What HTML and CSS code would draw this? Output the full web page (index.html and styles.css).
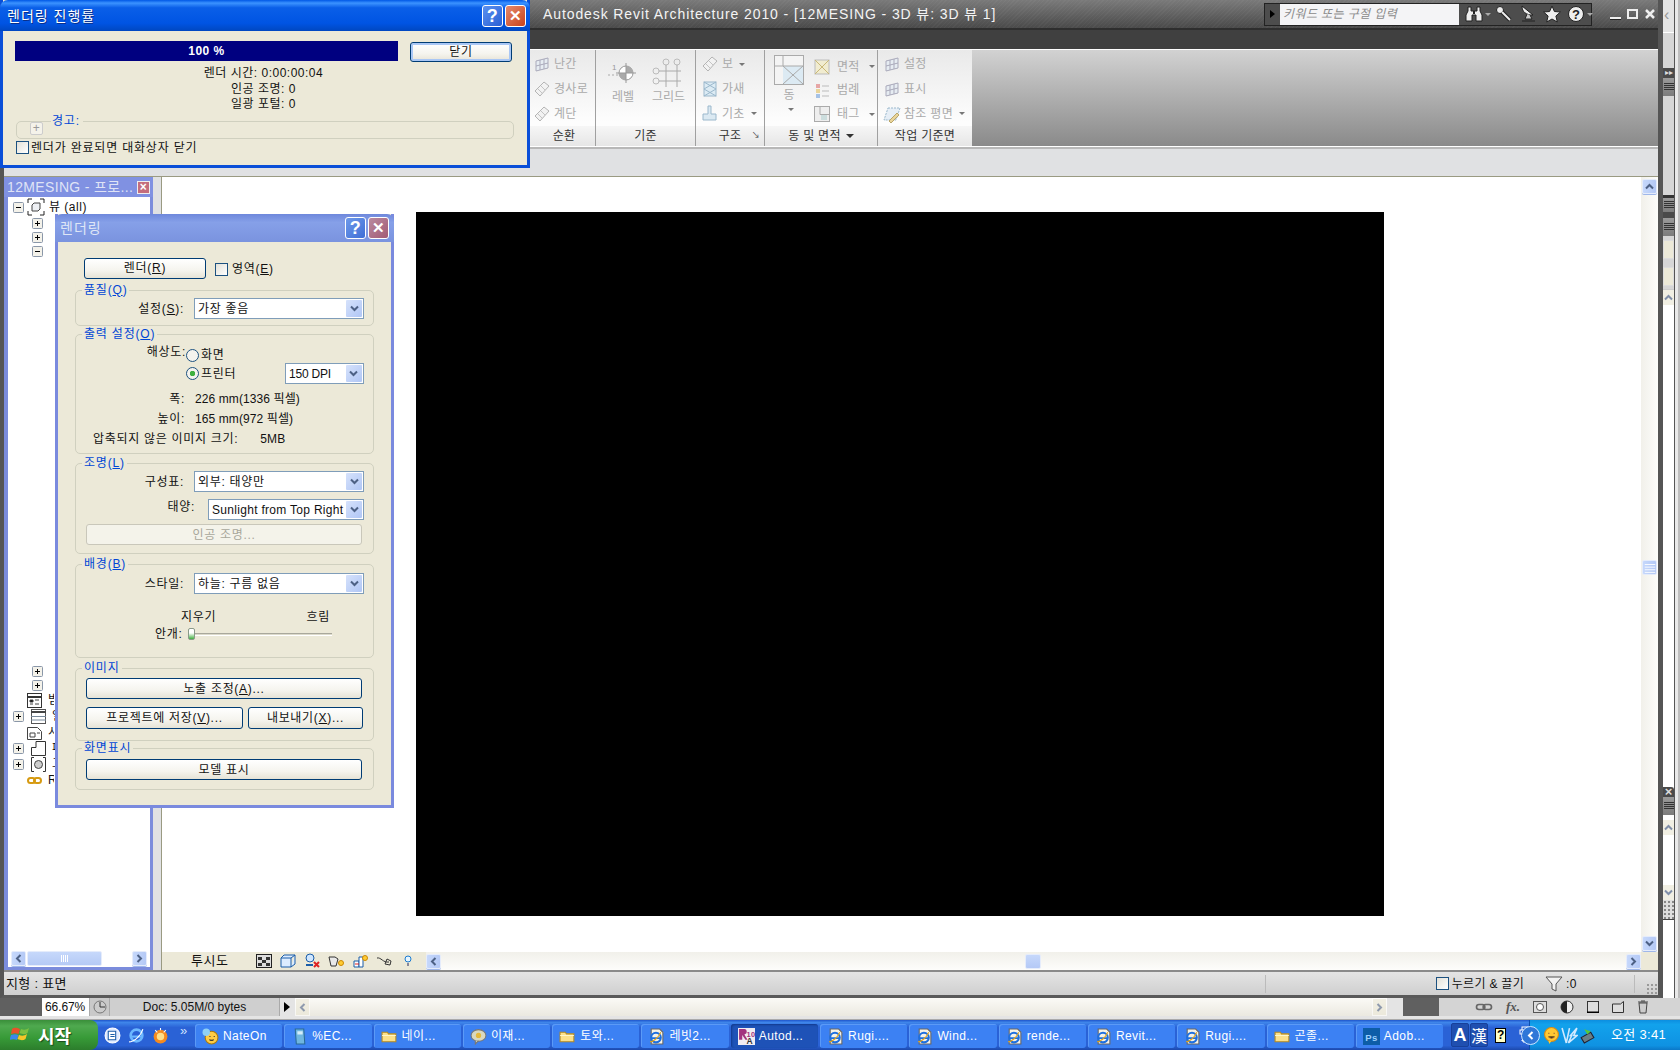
FILE: index.html
```html
<!DOCTYPE html>
<html lang="ko">
<head>
<meta charset="utf-8">
<title>Autodesk Revit Architecture 2010</title>
<link rel="stylesheet" href="styles.css">
</head>
<body>
<svg class="defs" width="0" height="0">
  <symbol id="ie" viewBox="0 0 16 16"><path d="M3 1h8l3 3v11H3z" fill="#f4f2e8" stroke="#666"/><circle cx="7.5" cy="9" r="4.5" fill="none" stroke="#1d6fe0" stroke-width="2"/><path d="M3.5 9.500h8" stroke="#1d6fe0" stroke-width="1.500"/><path d="M2 13c3 0 8-4 10-9" fill="none" stroke="#e3a51b"/></symbol>
  <symbol id="folder" viewBox="0 0 16 16"><path d="M1 4h5l1 1.500h7V13H1z" fill="#fbe08a" stroke="#b58a22"/><path d="M1 7h13" stroke="#fff6c8"/></symbol>
  <symbol id="plus" viewBox="0 0 11 11"><rect x=".5" y=".5" width="10" height="10" rx="1" fill="#f4f2ea" stroke="#8a97a8"/><path d="M3 5.500h5M5.500 3v5" stroke="#000"/></symbol>
  <symbol id="minus" viewBox="0 0 11 11"><rect x=".5" y=".5" width="10" height="10" rx="1" fill="#f4f2ea" stroke="#8a97a8"/><path d="M3 5.500h5" stroke="#000"/></symbol>
  <symbol id="arrow-down" viewBox="0 0 9 7"><path d="M1 1.500l3.500 3.500L8 1.500" fill="none" stroke="#4d6185" stroke-width="2"/></symbol>
  <symbol id="arrow-up" viewBox="0 0 9 7"><path d="M1 5.500L4.500 2 8 5.500" fill="none" stroke="#4d6185" stroke-width="2"/></symbol>
  <symbol id="arrow-left" viewBox="0 0 7 9"><path d="M5.500 1L2 4.500 5.500 8" fill="none" stroke="#4d6185" stroke-width="2"/></symbol>
  <symbol id="arrow-right" viewBox="0 0 7 9"><path d="M1.500 1L5 4.500 1.500 8" fill="none" stroke="#4d6185" stroke-width="2"/></symbol>
  <symbol id="lines" viewBox="0 0 14 16"><path d="M1 4h12M1 7h12M1 10h12M1 13h12" stroke="#fff"/></symbol>
  <symbol id="lines-dark" viewBox="0 0 12 12"><path d="M1 2.500h10M1 4.500h10M1 6.500h10M1 8.500h10" stroke="#333"/></symbol>
  <symbol id="rib-gen" viewBox="0 0 18 18"><path d="M2 11L11 2l5 4-9 10z" fill="#f2f2f2" stroke="#b4b4b4"/><path d="M5 9l4 4M8 6l4 4" stroke="#c4c4c4"/></symbol>
  <symbol id="rib-grid" viewBox="0 0 18 18"><path d="M3 6l12-3v10L3 16z" fill="#e6ecf2" stroke="#aab"/><path d="M7 5v10M11 4v10M3 11l12-3" stroke="#aab"/></symbol>
  <symbol id="rib-x" viewBox="0 0 18 18"><rect x="2" y="2" width="14" height="14" fill="#f1ecd0" stroke="#bbb"/><path d="M2 2l14 14M16 2L2 16" stroke="#c9b877"/></symbol>
  <symbol id="rib-bluex" viewBox="0 0 18 18"><rect x="3" y="2" width="12" height="14" fill="#dcebf4" stroke="#9bb8cc"/><path d="M3 2l12 7L3 16M15 2L3 9l12 7" fill="none" stroke="#9bb8cc"/></symbol>
  <symbol id="rib-legend" viewBox="0 0 18 18"><path d="M3 3h4v4H3z" fill="#e6a6a6"/><path d="M3 8h4v4H3z" fill="#e9d49a"/><path d="M3 13h4v4H3z" fill="#a6c2e6"/><path d="M9 5h7M9 10h7M9 15h7" stroke="#bbb"/></symbol>
  <symbol id="rib-tag" viewBox="0 0 18 18"><rect x="1.500" y="1.500" width="15" height="15" fill="#eee" stroke="#aaa"/><path d="M7 1.500v8h9.500" fill="none" stroke="#aaa"/><rect x="8" y="10" width="6" height="5" fill="#cdd"/></symbol>
  <symbol id="cube" viewBox="0 0 18 18"><path d="M1 5V1h4M13 1h4v4M17 13v4h-4M5 17H1v-4" fill="none" stroke="#222"/><path d="M5 7l2-2h6v6l-2 2H5z" fill="#eef0f4" stroke="#444"/></symbol>
</svg>

<div class="workspace">
  <div class="revit">
    <header class="titlebar">
      <span class="app-title">Autodesk Revit Architecture 2010 - [12MESING - 3D 뷰: 3D 뷰 1]</span>
      <div class="infobar">
        <span class="info-play"></span>
        <span class="info-input">키워드 또는 구절 입력</span>
        <svg class="info-ic" width="18" height="18" viewBox="0 0 18 18"><path d="M3 2h3v4h6V2h3v4l2 4v6h-6v-6H7v6H1v-6l2-4z" fill="#eee" stroke="#222"/><path d="M8 6h2v3H8z" fill="#222"/></svg>
        <span class="info-drop"></span>
        <svg class="info-ic" width="18" height="18" viewBox="0 0 18 18"><circle cx="5" cy="5" r="3.500" fill="#eee" stroke="#222"/><path d="M7 7l8 8" stroke="#222" stroke-width="4"/><path d="M7 7l8 8" stroke="#eee" stroke-width="2"/></svg>
        <svg class="info-ic" width="18" height="18" viewBox="0 0 18 18"><path d="M3 1c0 6 4 9 11 9z" fill="#eee" stroke="#222"/><path d="M8 9l-2 5h7l-2-4M3 16h13" fill="#ccc" stroke="#222"/></svg>
        <svg class="info-ic" width="18" height="18" viewBox="0 0 18 18"><path d="M9 1l2.400 5.500 6 .5-4.500 4 1.400 6L9 14l-5.300 3 1.400-6L.6 7l6-.5z" fill="#eee" stroke="#222"/></svg>
        <svg class="info-ic" width="18" height="18" viewBox="0 0 18 18"><circle cx="9" cy="9" r="7.500" fill="#eee" stroke="#222"/><text x="9" y="13.500" class="help-glyph">?</text></svg>
        <span class="info-drop"></span>
      </div>
      <div class="winctl">
        <span class="ctl-min"></span><span class="ctl-max"></span>
        <svg width="12" height="12" viewBox="0 0 12 12"><path d="M2 2l8 8M10 2l-8 8" stroke="#eee" stroke-width="2.500"/></svg>
      </div>
    </header>
    <div class="menubar"></div>
    <section class="ribbon">
      <div class="panel panel-loop">
        <div class="panel-body col">
          <div class="rib-item"><svg width="18" height="18"><use href="#rib-grid"/></svg>난간</div>
          <div class="rib-item"><svg width="18" height="18"><use href="#rib-gen"/></svg>경사로</div>
          <div class="rib-item"><svg width="18" height="18"><use href="#rib-gen"/></svg>계단</div>
        </div>
        <div class="panel-label">순환</div>
      </div>
      <div class="panel panel-datum">
        <div class="panel-body row">
          <div class="rib-large">
            <svg width="34" height="24" viewBox="0 0 34 24"><path d="M2 14h10" stroke="#aaa" stroke-dasharray="2 2"/><text x="6" y="9" class="rib-num">1</text><circle cx="20" cy="12" r="7" fill="#fff" stroke="#999"/><path d="M20 5a7 7 0 0 1 7 7h-7zM20 19a7 7 0 0 1-7-7h7z" fill="#aaa"/><path d="M10 12h20M20 2v20" stroke="#999"/></svg>
            <span>레벨</span>
          </div>
          <div class="rib-large">
            <svg width="32" height="30" viewBox="0 0 32 30"><circle cx="14" cy="4" r="3" fill="none" stroke="#bbb"/><circle cx="25" cy="4" r="3" fill="none" stroke="#bbb"/><circle cx="4" cy="13" r="3" fill="none" stroke="#bbb"/><circle cx="4" cy="23" r="3" fill="none" stroke="#bbb"/><path d="M14 7v22M25 7v22M7 13h22M7 23h22" stroke="#aaa"/></svg>
            <span>그리드</span>
          </div>
        </div>
        <div class="panel-label">기준</div>
      </div>
      <div class="panel panel-struct">
        <div class="panel-body col">
          <div class="rib-item"><svg width="18" height="18"><use href="#rib-gen"/></svg>보<i class="drop"></i></div>
          <div class="rib-item"><svg width="18" height="18"><use href="#rib-bluex"/></svg>가새</div>
          <div class="rib-item"><svg width="18" height="18" viewBox="0 0 18 18"><path d="M7 1h3v8h5v6H2V9h5z" fill="#dbe9f2" stroke="#9bb8cc"/></svg>기초<i class="drop"></i></div>
        </div>
        <div class="panel-label">구조<span class="launch">↘</span></div>
      </div>
      <div class="panel panel-room">
        <div class="panel-body row">
          <div class="rib-room">
            <svg width="30" height="30" viewBox="0 0 30 30"><rect x=".5" y=".5" width="29" height="29" fill="#f4f4f4" stroke="#aaa"/><path d="M9 11h20v18H9z" fill="#dceaf3"/><path d="M9 .5V11M.5 11H29.500M9 11l20 18M29 11L9 29" stroke="#aaa" fill="none"/></svg>
            <span>동</span><i class="drop"></i>
          </div>
          <div class="col col-room">
            <div class="rib-item"><svg width="18" height="18"><use href="#rib-x"/></svg>면적<i class="drop"></i></div>
            <div class="rib-item"><svg width="18" height="18"><use href="#rib-legend"/></svg>범례</div>
            <div class="rib-item"><svg width="18" height="18"><use href="#rib-tag"/></svg>태그<i class="drop"></i></div>
          </div>
        </div>
        <div class="panel-label">동 및 면적<i class="drop drop-dark"></i></div>
      </div>
      <div class="panel panel-work">
        <div class="panel-body col">
          <div class="rib-item"><svg width="18" height="18"><use href="#rib-grid"/></svg>설정</div>
          <div class="rib-item"><svg width="18" height="18"><use href="#rib-grid"/></svg>표시</div>
          <div class="rib-item"><svg width="18" height="18" viewBox="0 0 18 18"><path d="M5 3h12l-4 12H1z" fill="#e6eef6" stroke="#9bb8cc" stroke-dasharray="2 1"/><path d="M6 16l8-8 2 2-8 8z" fill="#e9d49a" stroke="#b9a66a"/></svg>참조 평면<i class="drop"></i></div>
        </div>
        <div class="panel-label">작업 기준면</div>
      </div>
      <div class="ribbon-fill"></div>
    </section>
    <div class="optionbar"></div>

    <main class="body">
      <aside class="dock">
        <div class="dock-title"><span>12MESING - 프로...</span><b class="dock-x">×</b></div>
        <div class="tree">
          <div class="tree-row l0"><svg width="11" height="11"><use href="#minus"/></svg><svg width="18" height="18"><use href="#cube"/></svg><span>뷰 (all)</span></div>
          <div class="tree-row l1"><svg width="11" height="11"><use href="#plus"/></svg></div>
          <div class="tree-row l1"><svg width="11" height="11"><use href="#plus"/></svg></div>
          <div class="tree-row l1"><svg width="11" height="11"><use href="#minus"/></svg></div>
          <div class="tree-gap"></div>
          <div class="tree-row l1"><svg width="11" height="11"><use href="#plus"/></svg></div>
          <div class="tree-row l1"><svg width="11" height="11"><use href="#plus"/></svg></div>
          <div class="tree-row l2"><span class="tree-blank"></span><svg width="15" height="15" viewBox="0 0 15 15"><rect x=".5" y=".5" width="14" height="14" fill="#fff" stroke="#333"/><path d="M0 4h15" stroke="#333" stroke-width="2"/><path d="M3 7h3v2H3zM8 7h4M3 11h3M8 11h4" stroke="#444"/></svg><span class="tree-clip">범례</span></div>
          <div class="tree-row l2"><svg width="11" height="11"><use href="#plus"/></svg><svg width="15" height="15" viewBox="0 0 15 15"><rect x=".5" y=".5" width="14" height="14" fill="#fff" stroke="#555"/><path d="M0 3h15" stroke="#444" stroke-width="2"/><path d="M0 7.500h15M0 11h15" stroke="#789"/></svg><span class="tree-clip">일람표</span></div>
          <div class="tree-row l2"><span class="tree-blank"></span><svg width="15" height="15" viewBox="0 0 15 15"><path d="M.5 2.500h10l4 4v8H.5z" fill="#fff" stroke="#444"/><path d="M3 8h5v4H3zM10 8h3" fill="none" stroke="#444"/></svg><span class="tree-clip">시트</span></div>
          <div class="tree-row l2"><svg width="11" height="11"><use href="#plus"/></svg><svg width="15" height="15" viewBox="0 0 15 15"><path d="M5 .5h9.500v14H.5v-8H5z" fill="#fff" stroke="#333"/></svg><span class="tree-clip">패밀리</span></div>
          <div class="tree-row l2"><svg width="11" height="11"><use href="#plus"/></svg><svg width="15" height="15" viewBox="0 0 15 15"><path d="M3 .5H.5v14H3M12 .5h2.500v14H12" fill="none" stroke="#333"/><circle cx="7.500" cy="7.500" r="4" fill="#ccc" stroke="#444"/></svg><span class="tree-clip">그룹</span></div>
          <div class="tree-row l2"><span class="tree-blank"></span><svg width="15" height="15" viewBox="0 0 15 15"><rect x="1" y="5" width="7" height="5" rx="2.500" fill="none" stroke="#d69a11" stroke-width="2"/><rect x="7" y="5" width="7" height="5" rx="2.500" fill="none" stroke="#d69a11" stroke-width="2"/></svg><span class="tree-clip">Revit</span></div>
        </div>
        <div class="dock-scroll">
          <span class="sb-btn"><svg width="7" height="9"><use href="#arrow-left"/></svg></span>
          <span class="sb-thumb-h"><i></i><i></i><i></i><i></i></span>
          <span class="sb-btn sb-end"><svg width="7" height="9"><use href="#arrow-right"/></svg></span>
        </div>
      </aside>
      <div class="canvas">
        <div class="view-row">
          <div class="view-area"><div class="render"></div></div>
          <div class="vscroll">
            <span class="sb-btn"><svg width="9" height="7"><use href="#arrow-up"/></svg></span>
            <span class="sb-thumb-v"><svg width="14" height="14"><use href="#lines"/></svg></span>
            <span class="sb-btn"><svg width="9" height="7"><use href="#arrow-down"/></svg></span>
          </div>
        </div>
        <div class="view-ctl">
          <span class="view-name">투시도</span>
          <div class="view-icons">
            <svg width="16" height="14" viewBox="0 0 16 14"><rect x=".5" y=".5" width="15" height="13" fill="#ddd" stroke="#222"/><path d="M2 3h4v3H2zM10 3h4v3h-4zM6 6h4v3H6zM2 9h4v3H2zM10 9h4v3h-4z" fill="#333"/></svg>
            <svg width="16" height="14" viewBox="0 0 16 14"><path d="M1 4h10v9H1zM1 4l3-3h11l-4 3M11 13l4-3V1" fill="#dcecff" stroke="#1b5da8"/></svg>
            <svg width="16" height="16" viewBox="0 0 16 16"><circle cx="6" cy="5" r="4" fill="#cfe6ff" stroke="#1b5da8"/><path d="M2 12h7" stroke="#1b5da8" stroke-width="2"/><path d="M10 9l5 5M15 9l-5 5" stroke="#d22" stroke-width="2"/></svg>
            <svg width="16" height="16" viewBox="0 0 16 16"><path d="M1 4h6l3 2-2 7H3z" fill="#e8e8e8" stroke="#333"/><circle cx="13" cy="10" r="2.500" fill="#fc3" stroke="#c80"/></svg>
            <svg width="16" height="16" viewBox="0 0 16 16"><path d="M2 8h5v6H2z" fill="#fff" stroke="#1b5da8"/><path d="M7 4h4v10H7z" fill="#fff" stroke="#1b5da8"/><circle cx="13" cy="5" r="2.500" fill="#fc3" stroke="#c80"/><path d="M3 11h4" stroke="#d22"/></svg>
            <svg width="16" height="16" viewBox="0 0 16 16"><path d="M1 5c4-1 6 5 12 4M11 6l4 2-1 4-5-1z" fill="none" stroke="#333"/></svg>
            <svg width="16" height="16" viewBox="0 0 16 16"><circle cx="8" cy="6" r="3" fill="#e6f5ff" stroke="#1b7bd0"/><path d="M7 10h2v3H7z" fill="#889"/></svg>
          </div>
          <div class="hscroll">
            <span class="sb-btn"><svg width="7" height="9"><use href="#arrow-left"/></svg></span>
            <span class="hs-track"><span class="sb-thumb-small"></span></span>
            <span class="sb-btn"><svg width="7" height="9"><use href="#arrow-right"/></svg></span>
          </div>
          <div class="corner"></div>
        </div>
      </div>
    </main>

    <footer class="status">
      <span class="status-text">지형 : 표면</span>
      <span class="status-sep status-sep-a"></span>
      <span class="check status-check"></span><span>누르기 &amp; 끌기</span>
      <svg class="filter-ic" width="18" height="16" viewBox="0 0 18 16"><path d="M1 1h16l-6 7v7l-4-2V8z" fill="#f2f2f2" stroke="#555"/></svg><span>:0</span>
      <span class="status-sep status-sep-b"></span>
      <span class="grip"></span>
    </footer>
  </div>

  <aside class="ps-strip">
    <div class="ps-col">
      <div class="ps-top"><span>‹</span></div>
      <div class="ps-panel ps-panel-top"></div>
      <div class="ps-tab"><span>▸▸</span></div>
      <div class="ps-head"><svg width="12" height="12"><use href="#lines-dark"/></svg></div>
      <div class="ps-panel ps-panel-a"></div>
      <div class="ps-rule"></div>
      <div class="ps-head ps-head-s"><svg width="12" height="12"><use href="#lines-dark"/></svg></div>
      <div class="ps-rule ps-rule-b"></div>
      <div class="ps-head"><svg width="12" height="12"><use href="#lines-dark"/></svg></div>
      <div class="ps-swatches"><span class="ps-swatch"></span><span class="ps-swatch"></span></div>
      <div class="ps-list"><span class="ps-up"><svg width="9" height="7"><use href="#arrow-up"/></svg></span></div>
      <div class="ps-tab ps-tab-x"><span>×</span></div>
      <div class="ps-head"><svg width="12" height="12"><use href="#lines-dark"/></svg></div>
      <div class="ps-list ps-list-b"><span class="ps-up"><svg width="9" height="7"><use href="#arrow-up"/></svg></span><span class="ps-up"><svg width="9" height="7"><use href="#arrow-down"/></svg></span></div>
      <div class="ps-grip"></div>
      <div class="ps-foot"></div>
    </div>
  </aside>
</div>

<div class="psbar">
  <span class="ps-zoom">66.67%</span>
  <span class="ps-clock"><svg width="14" height="14" viewBox="0 0 14 14"><circle cx="7" cy="7" r="6" fill="#ccc" stroke="#777"/><path d="M7 2v5h5" fill="none" stroke="#333"/></svg></span>
  <span class="ps-doc">Doc: 5.05M/0 bytes</span>
  <span class="ps-play"></span>
  <span class="ps-scroll">
    <span class="ps-sbtn"><svg width="7" height="9"><use href="#arrow-left"/></svg></span>
    <span class="ps-sbtn"><svg width="7" height="9"><use href="#arrow-right"/></svg></span>
  </span>
  <span class="ps-dark"></span>
  <span class="ps-tools">
    <svg width="18" height="10" viewBox="0 0 20 12"><rect x="1" y="3" width="10" height="6" rx="3" fill="none" stroke="#666" stroke-width="2"/><rect x="9" y="3" width="10" height="6" rx="3" fill="none" stroke="#666" stroke-width="2"/></svg>
    <i class="ps-fx">fx.</i>
    <svg width="14" height="12" viewBox="0 0 14 12"><rect x=".5" y=".5" width="13" height="11" fill="#ddd" stroke="#555"/><circle cx="7" cy="6" r="3.500" fill="#fff" stroke="#555"/></svg>
    <svg width="14" height="14" viewBox="0 0 14 14"><circle cx="7" cy="7" r="6" fill="#eee" stroke="#333"/><path d="M7 1a6 6 0 0 0 0 12z" fill="#222"/></svg>
    <svg width="12" height="12" viewBox="0 0 12 12"><rect x=".5" y=".5" width="11" height="11" fill="#ddd" stroke="#333"/><path d="M0 11.500h12" stroke="#000" stroke-width="2"/></svg>
    <svg width="12" height="12" viewBox="0 0 12 12"><path d="M.5 3h8l3-2.500v11H.5z" fill="#ddd" stroke="#333"/></svg>
    <svg width="12" height="14" viewBox="0 0 12 14"><path d="M2 3h8l-1 10H3zM1 2h10M4 1h4" fill="#ccc" stroke="#444"/></svg>
  </span>
</div>

<nav class="taskbar">
  <button class="start"><svg width="21" height="20" viewBox="0 0 21 20"><path d="M2 4c3-2 5-1 8 0L8.500 9C6 8 4 8 1 9z" fill="#e8522a"/><path d="M11 4c3 1 5 1 8-1l-1.500 5c-3 2-5 1-8 0z" fill="#7cc142"/><path d="M1 10c3-1 5-1 7.500 0L7 15c-2.500-1-5-1-7.500 0z" fill="#3b88ea"/><path d="M9 10c3 1 5 1 8-1l-1.500 5c-3 2-5 1-8 0z" fill="#f6c628"/></svg><span>시작</span></button>
  <div class="quick">
    <svg width="17" height="17" viewBox="0 0 16 16"><circle cx="8" cy="8" r="7" fill="#dfeaff" stroke="#fff"/><path d="M4 4h7v8H4z" fill="#fff" stroke="#1b5da8"/><path d="M6 7h4M6 9h4" stroke="#1b5da8"/></svg>
    <svg width="17" height="17" viewBox="0 0 16 16"><circle cx="8" cy="8" r="5.500" fill="none" stroke="#6bb7ff" stroke-width="2.500"/><path d="M3 9h10" stroke="#6bb7ff" stroke-width="2"/><path d="M1 14c4 0 11-5 13-12" fill="none" stroke="#fff"/></svg>
    <svg width="17" height="17" viewBox="0 0 16 16"><circle cx="8" cy="9" r="6.500" fill="#f58a1f"/><circle cx="8" cy="9" r="3.500" fill="#ffe08a"/><path d="M3 3l2 2M13 3l-2 2M8 1v2" stroke="#fff"/></svg>
    <span class="more">»</span>
  </div>
  <div class="tasks">
    <a class="task"><svg width="17" height="17" viewBox="0 0 16 16"><circle cx="9" cy="9" r="6" fill="#ffcc44" stroke="#a87a10"/><circle cx="4" cy="4" r="3.500" fill="#8fd0f5"/><path d="M7 8h1M11 8h1M7 11c1 1 3 1 4 0" stroke="#333"/></svg><span>NateOn</span></a>
    <a class="task"><svg width="17" height="17" viewBox="0 0 16 16"><path d="M4 1h8l1 14H5z" fill="#6fb6e0" stroke="#2a6a96"/><path d="M6 3h5v3H6z" fill="#d4edfa"/></svg><span>%EC...</span></a>
    <a class="task"><svg width="17" height="17"><use href="#folder"/></svg><span>네이...</span></a>
    <a class="task"><svg width="17" height="17" viewBox="0 0 16 16"><ellipse cx="8" cy="7" rx="7" ry="5.500" fill="#d8d8c0" stroke="#777"/><path d="M5 12v3l3-3" fill="#d8d8c0" stroke="#777"/><circle cx="8" cy="7" r="2.500" fill="#e5b93d"/></svg><span>이재...</span></a>
    <a class="task"><svg width="17" height="17"><use href="#folder"/></svg><span>토와...</span></a>
    <a class="task"><svg width="17" height="17"><use href="#ie"/></svg><span>레빗2...</span></a>
    <a class="task task-active"><svg width="17" height="17" viewBox="0 0 16 16"><rect width="16" height="16" fill="#f0ecf2"/><path d="M1 1h5c3 0 3 5 0 5l3 5H7L4 6.500V11H1z" fill="#a2347f"/><text x="8" y="8" class="revit-num">10</text><text x="8" y="15" class="revit-a">A</text></svg><span>Autod...</span></a>
    <a class="task"><svg width="17" height="17"><use href="#ie"/></svg><span>Rugi....</span></a>
    <a class="task"><svg width="17" height="17"><use href="#ie"/></svg><span>Wind...</span></a>
    <a class="task"><svg width="17" height="17"><use href="#ie"/></svg><span>rende...</span></a>
    <a class="task"><svg width="17" height="17"><use href="#ie"/></svg><span>Revit...</span></a>
    <a class="task"><svg width="17" height="17"><use href="#ie"/></svg><span>Rugi....</span></a>
    <a class="task"><svg width="17" height="17"><use href="#folder"/></svg><span>곤졸...</span></a>
    <a class="task"><svg width="17" height="17" viewBox="0 0 16 16"><rect width="16" height="16" fill="#0d5da8"/><text x="8" y="12" class="ps-glyph">Ps</text></svg><span>Adob...</span></a>
  </div>
  <div class="ime">
    <b class="ime-a">A</b><b class="ime-k">漢</b>
    <span class="ime-q">?</span>
    <svg width="10" height="18" viewBox="0 0 10 18"><rect x="3" y="1" width="6" height="4" fill="none" stroke="#fff"/><rect x="1" y="4" width="6" height="4" fill="#2a62d6" stroke="#fff"/><path d="M2 14h6l-3 3z" fill="#fff"/></svg>
  </div>
  <div class="tray">
    <span class="tray-back"><svg width="7" height="9" viewBox="0 0 7 9"><path d="M5.500 1L2 4.500 5.500 8" fill="none" stroke="#fff" stroke-width="2"/></svg></span>
    <svg width="17" height="17" viewBox="0 0 16 16"><circle cx="8" cy="7" r="6.500" fill="#ffc933" stroke="#d98a10"/><path d="M5 6h1M10 6h1M5 9c2 2 4 2 6 0" stroke="#963"/><path d="M5 13l1 3 2-3" fill="#ffc933"/></svg>
    <svg width="17" height="17" viewBox="0 0 16 16"><path d="M1 1l4 14L8 1M9 8l6-7-3 7 3 0-8 7 3-7z" fill="none" stroke="#cfe9ff" stroke-width="1.500"/></svg>
    <svg width="17" height="17" viewBox="0 0 16 16"><path d="M2 10l9-5 3 5-9 5z" fill="#6a7f86" stroke="#223"/><path d="M5 2l3 5 3-3z" fill="#58c93a"/></svg>
    <span class="clock">오전 3:41</span>
  </div>
</nav>

<section class="dialog dlg-progress">
  <div class="dlg-title"><span>렌더링 진행률</span><span class="cap cap-help">?</span><span class="cap cap-close">✕</span></div>
  <div class="dlg-body prog-body">
    <div class="prog-top">
      <div class="prog-bar">100 %</div>
      <button class="xp-btn prog-close">닫기</button>
    </div>
    <div class="prog-info">
      <div>렌더 시간: 0:00:00:04</div>
      <div>인공 조명: 0</div>
      <div>일광 포털: 0</div>
    </div>
    <div class="warn-box">
      <span class="legend warn-legend">경고:</span>
      <span class="warn-plus">+</span>
    </div>
    <label class="check-row"><span class="check"></span>렌더가 완료되면 대화상자 닫기</label>
  </div>
</section>

<section class="dialog dlg-render">
  <div class="dlg-title"><span>렌더링</span><span class="cap cap-help">?</span><span class="cap cap-close">✕</span></div>
  <div class="dlg-body render-body">
    <div class="render-top">
      <button class="xp-btn btn-render">렌더(<u>R</u>)</button>
      <span class="check"></span><span>영역(<u>E</u>)</span>
    </div>

    <div class="group g-quality">
      <span class="legend">품질(<u>Q</u>)</span>
      <div class="form-row"><span class="form-label">설정(<u>S</u>):</span><div class="combo"><span>가장 좋음</span><i class="combo-btn"><svg width="9" height="7"><use href="#arrow-down"/></svg></i></div></div>
    </div>

    <div class="group g-output">
      <span class="legend">출력 설정(<u>O</u>)</span>
      <div class="res-grid">
        <span class="form-label res-label">해상도:</span>
        <div class="res-opts">
          <div class="radio-row"><span class="radio"></span>화면</div>
          <div class="radio-row"><span class="radio radio-on"></span><span class="radio-name">프린터</span><div class="combo combo-dpi"><span>150 DPI</span><i class="combo-btn"><svg width="9" height="7"><use href="#arrow-down"/></svg></i></div></div>
        </div>
      </div>
      <div class="info-row info-w"><span class="form-label">폭:</span><span class="info-val">226 mm(1336 픽셀)</span></div>
      <div class="info-row info-h"><span class="form-label">높이:</span><span class="info-val">165 mm(972 픽셀)</span></div>
      <div class="info-size"><span>압축되지 않은 이미지 크기:</span><span class="info-val">5MB</span></div>
    </div>

    <div class="group g-light">
      <span class="legend">조명(<u>L</u>)</span>
      <div class="form-row"><span class="form-label">구성표:</span><div class="combo"><span>외부: 태양만</span><i class="combo-btn"><svg width="9" height="7"><use href="#arrow-down"/></svg></i></div></div>
      <div class="form-row sun-row"><span class="form-label sun-label">태양:</span><div class="combo combo-sun"><span>Sunlight from Top Right</span><i class="combo-btn"><svg width="9" height="7"><use href="#arrow-down"/></svg></i></div></div>
      <button class="xp-btn btn-wide btn-disabled">인공 조명...</button>
    </div>

    <div class="group g-bg">
      <span class="legend">배경(<u>B</u>)</span>
      <div class="form-row"><span class="form-label">스타일:</span><div class="combo"><span>하늘: 구름 없음</span><i class="combo-btn"><svg width="9" height="7"><use href="#arrow-down"/></svg></i></div></div>
      <div class="haze-labels"><span>지우기</span><span>흐림</span></div>
      <div class="haze-row"><span class="haze-name">안개:</span><div class="slider"><span class="slider-thumb"></span></div></div>
    </div>

    <div class="group g-image">
      <span class="legend">이미지</span>
      <button class="xp-btn btn-wide">노출 조정(<u>A</u>)...</button>
      <div class="btn-pair">
        <button class="xp-btn btn-save">프로젝트에 저장(<u>V</u>)...</button>
        <button class="xp-btn btn-export">내보내기(<u>X</u>)...</button>
      </div>
    </div>

    <div class="group g-display">
      <span class="legend">화면표시</span>
      <button class="xp-btn btn-wide">모델 표시</button>
    </div>
  </div>
</section>
</body>
</html>
```
FILE: styles.css
```css
* { box-sizing: border-box; }
html, body { margin: 0; padding: 0; }
body {
  width: 1680px; height: 1050px; overflow: hidden; position: relative;
  display: flex; flex-direction: column;
  background: #d4d4d4;
  font: 12px/14px "Liberation Sans", "Noto Sans CJK KR", sans-serif;
  color: #111;
}
svg { flex: none; display: block; }
.defs { position: absolute; }
u { text-underline-offset: 1px; }
i { font-style: normal; }

/* Revit window */
.workspace { height: 998px; display: flex; flex: none; }
.revit { width: 1663px; flex: none; display: flex; flex-direction: column; background: #e0e1e3; border-left: 4px solid #555; border-right: 5px solid #555; border-bottom: 3px solid #5a5a5a; }
.titlebar { height: 30px; flex: none; display: flex; align-items: center; background: repeating-linear-gradient(135deg, rgba(255,255,255,.03) 0 1px, transparent 1px 3px), linear-gradient(#7a7a7a, #4a4a4a); color: #fff; border-bottom: 2px solid #2e2e2e; }
.app-title { margin-left: 539px; font-size: 14px; letter-spacing: .9px; white-space: nowrap; color: #f4f4f4; }
.infobar { margin-left: auto; width: 328px; height: 23px; display: flex; align-items: center; gap: 5px; border: 1px solid #222; background: #4d4d4d; padding-left: 5px; }
.info-play { width: 0; height: 0; border-left: 5px solid #000; border-top: 4px solid transparent; border-bottom: 4px solid transparent; }
.info-input { width: 181px; height: 21px; background: #f4f4f6; color: #8a8a8a; font-style: italic; line-height: 20px; padding-left: 3px; letter-spacing: .4px; }
.info-drop { width: 0; height: 0; border: 3px solid transparent; border-top: 3px solid #aaa; margin: 3px -2px 0 -3px; }
.info-ic { margin-left: 1px; }
.help-glyph { font: bold 13px "Liberation Sans"; text-anchor: middle; fill: #222; }
.winctl { width: 66px; padding-left: 18px; display: flex; align-items: center; gap: 6px; }
.ctl-min { width: 11px; height: 3px; background: #eee; border-bottom: 1px solid #222; margin-top: 8px; }
.ctl-max { width: 11px; height: 10px; border: 2px solid #eee; }
.menubar { height: 20px; flex: none; background: #404040; border-bottom: 1px solid #fff; }
.ribbon { height: 97px; flex: none; display: flex; background: #fff; border-bottom: 1px solid #fff; }
.panel { display: flex; flex-direction: column; border-right: 1px solid #a0a0a0; background: linear-gradient(#e9e9e9, #fdfdfd 75%); color: #aaa; }
.panel-loop { width: 592px; }
.panel-datum { width: 100px; }
.panel-struct { width: 69px; }
.panel-room { width: 113px; }
.panel-work { width: 94px; border-right: 0; }
.panel-body { flex: 1; min-height: 0; }
.panel-label { height: 20px; flex: none; display: flex; align-items: center; justify-content: center; gap: 5px; position: relative; color: #333; letter-spacing: .3px; background: linear-gradient(#f6f6f6, #e6e6e6); }
.launch { position: absolute; right: 4px; font-size: 8px; }
.col { display: flex; flex-direction: column; justify-content: space-around; padding: 2px 0 0; }
.row { display: flex; justify-content: space-around; padding: 3px 4px 0; }
.panel-loop .panel-body, .panel-loop .panel-label { padding-left: 529px; }
.panel-struct .panel-body, .panel-work .panel-body { padding-left: 5px; }
.panel-room .row { justify-content: flex-start; padding-left: 9px; }
.col-room { flex: 1; padding-left: 9px; }
.col-room .rib-item { gap: 6px; }
.rib-item { display: flex; align-items: center; gap: 3px; height: 22px; white-space: nowrap; letter-spacing: .3px; }
.rib-large { display: grid; grid-template-rows: 34px auto; align-content: start; justify-items: center; align-items: center; padding-top: 3px; }
.rib-large span { white-space: nowrap; }
.rib-room { width: 30px; flex: none; display: flex; flex-direction: column; align-items: center; padding-top: 2px; gap: 3px; }
.rib-num { font: 8px "Liberation Sans"; fill: #999; }
.drop { display: inline-block; width: 0; height: 0; border: 3px solid transparent; border-top: 3px solid #777; margin: 3px 0 0 3px; }
.drop-dark { border-width: 4px; border-top-color: #333; margin: 4px 0 0; }
.ribbon-fill { flex: 1; background: linear-gradient(#d2d2d2, #8a8a8a); }
.optionbar { height: 30px; flex: none; border-top: 2px solid #b8b8b8; background: #e0e1e3; }

.body { flex: 1; min-height: 0; display: flex; background: #e0e1e3; border-top: 1px solid #9a9a82; margin-top: -1px; }
.dock { width: 149px; flex: none; display: flex; flex-direction: column; background: #fff; border: 3px solid #7b8cdc; border-top: 0; border-left-width: 4px; }
.dock-title { height: 20px; flex: none; margin: 0 -3px 0 -4px; padding: 0 3px 0 3px; background: #8091e2; color: #dfe3f6; display: flex; align-items: center; justify-content: space-between; font-size: 14px; font-weight: 400; letter-spacing: .35px; white-space: nowrap; }
.dock-x { width: 13px; height: 13px; background: #c46d7d; color: #fff; border: 1px solid #eee; font: bold 12px/10px "Liberation Sans"; text-align: center; }
.tree { flex: 1; min-height: 0; overflow: hidden; background: #fff; letter-spacing: .5px; padding-top: 1px; }
.tree-row { height: 14px; display: flex; align-items: center; white-space: nowrap; gap: 3px; position: relative; }
.tree-row span { padding-left: 3px; }
.tree-clip { width: 9px; overflow: hidden; flex: none; }
.l0 { padding-left: 5px; height: 18px; }
.l0 span { padding-left: 1px; }
.l1 { padding-left: 24px; }
.l2 { padding-left: 5px; height: 16px; }
.l2 svg + svg { margin-left: 4px; }
.tree-blank { width: 11px; padding: 0 !important; }
.tree-gap { height: 406px; }
.dock-scroll { height: 18px; flex: none; display: flex; align-items: center; gap: 1px; padding: 0 3px; }
.sb-btn { width: 15px; height: 15px; flex: none; display: flex; align-items: center; justify-content: center; background: linear-gradient(90deg, #c6d8fb, #b4c9f6); border: 1px solid #e5ecfb; border-radius: 2px; box-shadow: 0 1px 0 #9fb7ea; }
.sb-end { margin-left: auto; }
.sb-thumb-h { width: 75px; height: 15px; display: flex; align-items: center; justify-content: center; gap: 1px; background: linear-gradient(#c6d8fb, #b5caf5); border: 1px solid #e5ecfb; border-radius: 2px; }
.sb-thumb-h i { width: 1px; height: 7px; background: #fff; }

.canvas { flex: 1; min-width: 0; margin-left: 8px; display: flex; flex-direction: column; background: #fff; border-left: 1px solid #9a9a82; }
.view-row { flex: 1; min-height: 0; display: flex; }
.view-area { flex: 1; min-width: 0; padding: 35px 0 0 254px; background: #fff; }
.render { width: 968px; height: 704px; background: #000; }
.vscroll { width: 17px; flex: none; display: flex; flex-direction: column; justify-content: space-between; align-items: center; padding: 2px 0 1px; background: linear-gradient(90deg, #f1f0ea, #fdfdfb); }
.sb-thumb-v { width: 15px; height: 15px; display: flex; align-items: center; justify-content: center; background: linear-gradient(90deg, #c6d8fb, #b4c9f6); border: 1px solid #e5ecfb; border-radius: 2px; margin-top: 5px; }
.view-ctl { height: 18px; flex: none; display: flex; align-items: center; background: #ece9d8; }
.view-name { width: 95px; padding-left: 29px; white-space: nowrap; font-size: 13px; letter-spacing: .6px; }
.view-icons { width: 170px; display: flex; align-items: center; gap: 8px; margin-left: -1px; padding-right: 0; }
.hscroll { flex: 1; min-width: 0; height: 18px; display: flex; align-items: center; background: linear-gradient(#f1f0ea, #fdfdfb); }
.hs-track { flex: 1; display: flex; justify-content: center; }
.sb-thumb-small { width: 16px; height: 15px; background: linear-gradient(#c6d8fb, #b4c9f6); border: 1px solid #e5ecfb; border-radius: 2px; margin-left: -1px; }
.corner { width: 17px; height: 18px; background: #ece9d8; }

.status { height: 25px; flex: none; display: flex; align-items: center; padding-left: 2px; gap: 3px; background: linear-gradient(#e4e4e4, #cfcfcf); border-top: 2px solid #8a8a8a; letter-spacing: .3px; }
.status-text { font-size: 13px; }
.status-sep { width: 1px; height: 18px; background: #f2f0e2; border-right: 1px solid #bbb; }
.status-sep-a { margin-left: 1195px; margin-right: 167px; }
.filter-ic { margin-left: 18px; }
.status-sep-b { margin-left: 54px; }
.grip { margin-left: auto; width: 12px; height: 12px; align-self: flex-end; background: radial-gradient(circle, #999 1px, transparent 1.200px) 0 0 / 4px 4px; }

/* Photoshop palettes behind */
.ps-strip { flex: 1; min-width: 0; background: #e9e9e9; display: flex; padding-right: 3px; border-right: 2px solid #bdbdbd; }
.ps-col { width: 12px; display: flex; flex-direction: column; flex: 1; border-right: 1px solid #555; }
.ps-top { height: 33px; flex: none; background: #e4e4e4; color: #999; font-size: 16px; line-height: 30px; padding-left: 1px; border-bottom: 1px solid #fff; }
.ps-panel { background: #d6d6d6; flex: none; }
.ps-panel-top { height: 35px; }
.ps-tab { height: 10px; flex: none; background: #4a4a4a; color: #ddd; font-size: 8px; line-height: 10px; text-align: center; }
.ps-tab-x { height: 10px; font-size: 13px; font-weight: 700; border-radius: 0 3px 0 0; }
.ps-head { height: 18px; flex: none; display: flex; align-items: center; background: linear-gradient(#9a9a9a, #7c7c7c); }
.ps-head-s { height: 14px; }
.ps-panel-a { height: 99px; }
.ps-rule { height: 3px; flex: none; background: #333; }
.ps-rule-b { height: 6px; background: #4a4a4a; }
.ps-swatches { height: 54px; flex: none; display: flex; flex-direction: column; gap: 8px; padding-top: 4px; background: #d6d6d6; border-bottom: 1px solid #ccc; }
.ps-swatch { height: 19px; background: #ece9d8; border: 1px solid #ddd; }
.ps-list { flex: 1; min-height: 0; background: #fff; }
.ps-list-b { flex: none; height: 85px; display: flex; flex-direction: column; justify-content: space-between; padding: 5px 0 0; }
.ps-up { display: flex; width: 11px; height: 15px; align-items: center; justify-content: center; background: #ece9d8; opacity: .7; overflow: hidden; }
.ps-grip { height: 20px; flex: none; background: radial-gradient(circle, #888 1px, transparent 1.200px) 0 0 / 4px 4px, #dedede; border-bottom: 1px solid #444; }
.ps-foot { height: 78px; flex: none; background: #fff; }

.psbar { height: 22px; flex: none; display: flex; align-items: stretch; background: #e4e4e4; padding-bottom: 3px; border-bottom: 1px solid #aaa; }
.ps-zoom { width: 90px; padding-left: 45px; background: linear-gradient(90deg, #606060 42px, #fff 42px); color: #111; line-height: 18px; letter-spacing: -.1px; border-right: 1px solid #aaa; }
.ps-clock { width: 20px; display: flex; align-items: center; justify-content: center; background: #c9c9c9; border-right: 1px solid #aaa; }
.ps-doc { width: 170px; text-align: center; background: #cfcfcf; line-height: 18px; border-right: 1px solid #aaa; }
.ps-play { width: 14px; position: relative; background: #e4e4e4; }
.ps-play::after { content: ""; position: absolute; left: 4px; top: 4px; border-left: 6px solid #000; border-top: 5px solid transparent; border-bottom: 5px solid transparent; }
.ps-scroll { width: 1092px; display: flex; justify-content: space-between; background: linear-gradient(#fbfaf6, #ebe9e0); margin-left: 1px; }
.ps-sbtn { width: 15px; display: flex; align-items: center; justify-content: center; background: #ece9d8; opacity: .6; border: 1px solid #fff; }
.ps-dark { width: 36px; background: #606060; margin-left: 16px; }
.ps-tools { flex: 1; display: flex; align-items: center; gap: 13px; padding-left: 36px; background: #d4d4d4; }
.ps-fx { font: italic bold 13px "Liberation Serif", serif; color: #555; }

/* XP taskbar */
.taskbar { flex: 1; min-height: 0; display: flex; align-items: stretch; background: linear-gradient(#1f55cc 0, #3f86ea 8%, #2a62d6 25%, #2a62d6 85%, #1c49ad); color: #fff; }
.start { width: 98px; flex: none; display: flex; align-items: center; gap: 7px; padding: 0 0 0 10px; border: 0; border-radius: 0 8px 8px 0; background: linear-gradient(#3a8f3a, #4fa94f 20%, #379a37 60%, #2c7d2c); color: #fff; font: bold 18px "Noto Sans CJK KR", sans-serif; text-shadow: 1px 1px 1px #1a4a1a; }
.quick { width: 97px; flex: none; display: flex; align-items: center; gap: 7px; padding-left: 6px; }
.more { font-size: 13px; margin: -8px 0 0 4px; color: #cfe0ff; }
.tasks { width: 1250px; flex: none; display: flex; gap: 2px; padding: 4px 0 2px; }
.task { width: 87.300px; flex: none; display: flex; align-items: center; gap: 4px; padding-left: 7px; background: #3c81f3; border-radius: 3px; box-shadow: inset 1px 1px 0 #5b9af7; white-space: nowrap; letter-spacing: .4px; overflow: hidden; }
.task-active { background: #1e52b7; box-shadow: inset 1px 1px 2px #123a8c; }
.revit-num { font: bold 7px "Liberation Sans"; fill: #a2347f; }
.revit-a { font: bold 8px "Liberation Sans"; fill: #333; }
.ps-glyph { font: bold 9px "Liberation Sans"; fill: #9cd0ff; text-anchor: middle; }
.ime { flex: 1; min-width: 0; display: flex; align-items: center; gap: 1px; padding-left: 6px; }
.ime-a, .ime-k { width: 22px; height: 24px; display: flex; align-items: center; justify-content: center; background: #1f4fb0; font-size: 18px; border: 1px solid #17409a; border-radius: 2px; font-weight: 700; }
.ime-k { font-weight: 400; font-size: 16px; font-family: "Noto Sans CJK KR", sans-serif; }
.ime-q { width: 13px; height: 15px; margin: 0 12px 0 6px; background: #ffffc8; border: 1px solid #000; color: #000; font: bold 12px/13px "Liberation Sans"; text-align: center; }
.tray { width: 151px; flex: none; display: flex; align-items: center; gap: 1px; background: linear-gradient(#0c8ee0, #12a2ec 15%, #0f92e2 85%, #0b78c8); border-left: 1px solid #0b4fae; }
.tray-back { width: 19px; height: 19px; flex: none; margin-left: -9px; margin-right: 2px; display: flex; align-items: center; justify-content: center; border-radius: 50%; background: #2f77d8; border: 1px solid #cfe6ff; }
.clock { margin-left: auto; padding-right: 14px; white-space: nowrap; font-size: 13px; letter-spacing: .3px; }

/* Dialogs */
.dialog { position: absolute; display: flex; flex-direction: column; background: #ece9d8; letter-spacing: .7px; }
.dlg-title { flex: none; display: flex; align-items: center; color: #fff; white-space: nowrap; }
.dlg-title span:first-child { flex: 1; font-size: 14px; letter-spacing: 1px; text-shadow: 1px 1px 0 #0a2f8a; }
.cap { width: 21px; height: 22px; flex: none; margin-left: 2px; display: flex; align-items: center; justify-content: center; border: 1px solid #fff; border-radius: 3px; font: bold 18px "Liberation Sans", sans-serif; background: linear-gradient(135deg, #5b92f0, #2a5fd5); }
.cap-close { background: linear-gradient(135deg, #e58a6c, #c8421c); font-size: 15px; }
.dlg-body { flex: 1; min-height: 0; position: relative; }

.dlg-progress { left: 0; top: 0; width: 530px; height: 168px; border: 3px solid #0a4fd8; border-top: 0; z-index: 3; }
.dlg-progress .dlg-title { height: 31px; margin: 0 -3px; padding: 1px 4px 0 7px; background: linear-gradient(#0058e6, #3b93ff 10%, #0a5fe8 25%, #0054e3 75%, #0047c0); border-radius: 8px 8px 0 0; }
.prog-body { padding: 10px 15px 0 12px; }
.prog-top { display: flex; align-items: flex-start; justify-content: space-between; }
.prog-bar { width: 383px; height: 20px; background: #000080; color: #fff; text-align: center; font-weight: 700; letter-spacing: .5px; line-height: 20px; }
.prog-close { width: 102px; height: 20px; margin-top: 1px; box-shadow: inset 0 0 0 2px #a9c7f5; }
.prog-info { text-align: center; line-height: 15.500px; letter-spacing: .5px; padding-top: 4px; }
.warn-box { height: 18px; margin: 8px 0 2px 1px; width: 498px; border: 1px solid #d0d0bf; border-radius: 5px; position: relative; }
.warn-box .warn-legend { left: 34px; top: -8px; padding: 0 3px 0 1px; }
.warn-plus { position: absolute; left: 13px; top: 0; width: 13px; height: 13px; background: #f4f2ea; border: 1px solid #ccc; border-radius: 2px; color: #999; line-height: 10px; text-align: center; }
.check-row { display: flex; align-items: center; gap: 2px; margin-left: 1px; letter-spacing: .8px; }
.check { width: 13px; height: 13px; flex: none; display: inline-block; background: linear-gradient(135deg, #e3e1d8, #fff); border: 1px solid #1c5180; }

.xp-btn { display: block; padding: 0; border: 1px solid #003c74; border-radius: 3px; background: linear-gradient(#fff, #f5f4ee 60%, #e6e3d6); color: #111; font: inherit; letter-spacing: inherit; text-align: center; white-space: nowrap; }

.dlg-render { left: 55px; top: 214px; width: 339px; height: 594px; border: 3px solid #7a8ade; border-top: 0; z-index: 2; }
.dlg-render .dlg-title { height: 28px; margin: 0 -3px; padding: 0 5px 0 5px; background: linear-gradient(#6e88dc, #86a0e8 30%, #7a93df); border-radius: 7px 7px 0 0; }
.dlg-render .dlg-title span:first-child { color: #dfe6f6; text-shadow: none; }
.dlg-render .cap-help { background: linear-gradient(135deg, #6f9aea, #3f6ed6); }
.dlg-render .cap-close { background: linear-gradient(135deg, #b98aa0, #a35a74); }
.render-body { padding: 15px 17px 0 17px; display: flex; flex-direction: column; }
.render-top { height: 22px; flex: none; display: flex; align-items: center; padding-left: 9px; }
.btn-render { width: 122px; height: 21px; margin-right: 9px; }
.render-top .check { margin: 3px 4px 0 0; }
.render-top span:last-child { margin-top: 2px; }
.group { flex: none; position: relative; border: 1px solid #d0d0bf; border-radius: 5px; margin-top: 10px; padding: 0 10px; }
.legend { position: absolute; left: 6px; top: -8px; padding: 0 2px; background: #ece9d8; color: #0046d5; white-space: nowrap; letter-spacing: .8px; }
.g-quality { height: 36px; margin-top: 11px; padding-top: 7px; }
.g-output { height: 120px; margin-top: 8px; padding-top: 13px; }
.g-light { height: 91px; margin-top: 9px; padding-top: 7px; }
.g-bg { height: 94px; margin-top: 10px; padding-top: 8px; }
.g-image { height: 73px; margin-top: 10px; padding-top: 9px; }
.g-display { height: 42px; padding-top: 10px; margin-top: 7px; }
.form-row { display: flex; align-items: center; justify-content: flex-end; gap: 10px; }
.form-label { white-space: nowrap; }
.combo { width: 170px; height: 21px; margin-right: -1px; flex: none; display: flex; align-items: center; justify-content: space-between; padding: 1px 1px 1px 3px; background: #fff; border: 1px solid #7f9db9; white-space: nowrap; }
.combo-btn { width: 16px; height: 17px; display: flex; align-items: center; justify-content: center; background: linear-gradient(135deg, #d6e2fb, #b0c6f5); border-radius: 1px; }
.combo-dpi { width: 79px; margin-left: auto; letter-spacing: -.2px; }
.combo-sun { width: 156px; letter-spacing: .3px; }
.sun-row { margin-top: 7px; gap: 13px; }
.sun-label { margin-top: -6px; }
.btn-wide { width: 276px; height: 21px; }
.g-light .btn-wide { margin-top: 4px; }
.btn-disabled { border-color: #c9c7ba; background: #f4f3ea; color: #a8a79b; box-shadow: none; }
.res-grid { display: flex; }
.res-label { width: 100px; text-align: right; margin-top: -3px; flex: none; }
.res-opts { flex: 1; }
.radio-row { display: flex; align-items: center; gap: 2px; height: 14px; }
.radio-row + .radio-row { height: 21px; margin-top: 1px; }
.radio { width: 13px; height: 13px; flex: none; border-radius: 50%; border: 1px solid #1c5180; background: #f4f3ee; display: flex; }
.radio-on { background: radial-gradient(circle, #3fb03f 0 2.500px, #f4f3ee 3px); }
.radio-name { margin-right: auto; }
.info-row { display: flex; gap: 10px; }
.info-row .form-label { width: 99px; text-align: right; flex: none; }
.info-val { letter-spacing: .1px; }
.info-w { margin-top: 8px; }
.info-h { margin-top: 6px; }
.info-size { display: flex; gap: 22px; padding-left: 7px; margin-top: 6px; }
.haze-labels { display: flex; justify-content: space-between; padding: 16px 33px 0 95px; }
.haze-row { display: flex; align-items: center; gap: 5px; margin-top: 3px; padding-left: 69px; }
.haze-name { white-space: nowrap; }
.slider { width: 144px; height: 3px; background: #dcdacb; border-top: 1px solid #a9a89c; border-bottom: 1px solid #fff; position: relative; }
.slider-thumb { position: absolute; left: 0; top: -6px; width: 7px; height: 12px; border-radius: 2px; background: linear-gradient(#fff 40%, #3fb03f); border: 1px solid #8a9a8a; }
.btn-pair { display: flex; gap: 5px; margin-top: 8px; }
.btn-save { width: 157px; height: 22px; flex: none; }
.btn-export { width: 115px; height: 22px; flex: none; }
```
